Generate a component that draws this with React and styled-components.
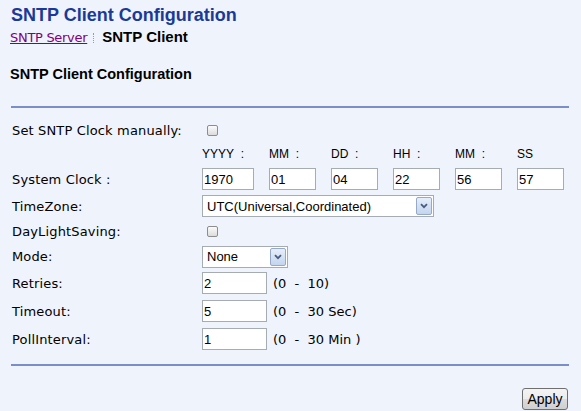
import React from "react";
import styled, { createGlobalStyle } from "styled-components";

const GlobalStyle = createGlobalStyle`
  html, body {
    margin: 0;
    padding: 0;
    background: #eff3fb;
  }
  body {
    width: 581px;
    height: 411px;
    overflow: hidden;
  }
`;

const Page = styled.div`
  padding: 4px 12px 0 11px;
  font-family: "DejaVu Sans", Verdana, sans-serif;
  font-size: 13px;
  color: #000;
`;

const Title = styled.h1`
  margin: 0;
  font: bold 18px/22px "Liberation Sans", Arial, sans-serif;
  color: #1b3a98;
`;

const Breadcrumb = styled.div`
  display: flex;
  align-items: baseline;
  height: 20px;
  line-height: 20px;
  margin-top: 2px;
`;

const NavLink = styled.a`
  margin-left: -1px;
  font: 13px "DejaVu Sans", Verdana, sans-serif;
  letter-spacing: -0.3px;
  color: #800080;
  text-decoration: underline;
  cursor: pointer;
`;

const Separator = styled.span`
  align-self: center;
  width: 0;
  height: 10px;
  margin: 0 8px 0 6px;
  border-left: 1px dotted #9a9a9a;
`;

const Current = styled.span`
  font: bold 15px "Liberation Sans", Arial, sans-serif;
`;

const SectionTitle = styled.h2`
  margin: 17px 0 0 -1px;
  font: bold 14.5px/18px "Liberation Sans", Arial, sans-serif;
`;

const Rule = styled.div`
  height: 2px;
  background: #7b8ec9;
  margin-top: ${(p) => p.$top}px;
`;

const Form = styled.div`
  margin-top: 10px;
`;

const Row = styled.div`
  display: grid;
  grid-template-columns: 191px 1fr;
  align-items: center;
  height: ${(p) => p.$h}px;
`;

const Label = styled.div`
  padding-left: 1px;
  font: 13px "DejaVu Sans", Verdana, sans-serif;
  letter-spacing: 0.15px;
  white-space: nowrap;
`;

const Field = styled.div`
  display: flex;
  align-items: center;
  gap: 6px;
`;

const DateGrid = styled.div`
  display: grid;
  grid-template-columns: 67px repeat(5, 62px);
  align-items: center;
`;

const DateLabel = styled.span`
  font: 12px "Liberation Sans", Arial, sans-serif;
  white-space: pre;
`;

const TextInput = styled.input`
  box-sizing: border-box;
  width: ${(p) => p.$w}px;
  height: 22px;
  margin: 0;
  padding: 0 1px;
  border: 1px solid #a5acb2;
  background: #fff;
  color: #000;
  font: 13px "Liberation Sans", Arial, sans-serif;
  outline: none;
`;

const Check = styled.input.attrs({ type: "checkbox" })`
  appearance: none;
  box-sizing: border-box;
  width: 11px;
  height: 11px;
  margin: 0 0 0 5px;
  border: 1px solid #8d8d8d;
  border-radius: 2px;
  background: linear-gradient(#fbfbfb, #dcdcdc);
`;

const SelectBox = styled.div`
  box-sizing: border-box;
  display: flex;
  width: ${(p) => p.$w}px;
  height: 22px;
  padding: 1px;
  border: 1px solid #a5acb2;
  background: #fff;
`;

const SelectText = styled.select`
  appearance: none;
  flex: 1;
  min-width: 0;
  margin: 0;
  padding: 0 0 0 3px;
  border: none;
  background: transparent;
  color: #000;
  font: 13px "Liberation Sans", Arial, sans-serif;
  outline: none;
`;

const ArrowBox = styled.span`
  box-sizing: border-box;
  display: flex;
  align-items: center;
  justify-content: center;
  width: 16px;
  border: 1px solid #97a9c9;
  border-radius: 2px;
  background: linear-gradient(#e6eefa, #c3d5ee);
`;

const Range = styled.span`
  font: 13px "DejaVu Sans", Verdana, sans-serif;
  white-space: pre;
`;

const Actions = styled.div`
  display: flex;
  justify-content: flex-end;
  margin-top: 22px;
  padding-right: 1px;
`;

const Button = styled.button`
  box-sizing: border-box;
  width: 46px;
  height: 22px;
  padding: 0;
  border: 1px solid #6f6f6f;
  border-radius: 3px;
  background: linear-gradient(#f4f4f4 0%, #ececec 50%, #dcdcdc 51%, #cfcfcf 100%);
  color: #000;
  font: 14px "Liberation Sans", Arial, sans-serif;
`;

const Chevron = () => (
  <svg width="8" height="6" viewBox="0 0 8 6">
    <polyline points="1,1.2 4,4.2 7,1.2" fill="none" stroke="#4a5d80" strokeWidth="1.8" />
  </svg>
);

const Select = ({ w, value, options }) => (
  <SelectBox $w={w}>
    <SelectText defaultValue={value}>
      {options.map((o) => (
        <option key={o}>{o}</option>
      ))}
    </SelectText>
    <ArrowBox>
      <Chevron />
    </ArrowBox>
  </SelectBox>
);

const dateParts = [
  { label: "YYYY\u00a0 :", value: "1970", w: 52 },
  { label: "MM\u00a0 :", value: "01", w: 47 },
  { label: "DD\u00a0 :", value: "04", w: 47 },
  { label: "HH\u00a0 :", value: "22", w: 47 },
  { label: "MM\u00a0 :", value: "56", w: 47 },
  { label: "SS", value: "57", w: 47 },
];

export default function App() {
  return (
    <>
      <GlobalStyle />
      <Page>
        <Title>SNTP Client Configuration</Title>
        <Breadcrumb>
          <NavLink>SNTP Server</NavLink>
          <Separator />
          <Current>SNTP Client</Current>
        </Breadcrumb>
        <SectionTitle>SNTP Client Configuration</SectionTitle>
        <Rule $top={23} />
        <Form>
          <Row $h={25}>
            <Label>Set SNTP Clock manually:</Label>
            <Field>
              <Check />
            </Field>
          </Row>
          <Row $h={22}>
            <span />
            <DateGrid>
              {dateParts.map((d, i) => (
                <DateLabel key={i}>{d.label}</DateLabel>
              ))}
            </DateGrid>
          </Row>
          <Row $h={28}>
            <Label>System Clock :</Label>
            <DateGrid>
              {dateParts.map((d, i) => (
                <TextInput key={i} $w={d.w} defaultValue={d.value} />
              ))}
            </DateGrid>
          </Row>
          <Row $h={26}>
            <Label>TimeZone:</Label>
            <Field>
              <Select w={232} value="UTC(Universal,Coordinated)" options={["UTC(Universal,Coordinated)"]} />
            </Field>
          </Row>
          <Row $h={25}>
            <Label>DayLightSaving:</Label>
            <Field>
              <Check />
            </Field>
          </Row>
          <Row $h={25}>
            <Label>Mode:</Label>
            <Field>
              <Select w={86} value="None" options={["None"]} />
            </Field>
          </Row>
          <Row $h={28}>
            <Label>Retries:</Label>
            <Field>
              <TextInput $w={65} defaultValue="2" />
              <Range>{"(0\u00a0 -\u00a0 10)"}</Range>
            </Field>
          </Row>
          <Row $h={28}>
            <Label>Timeout:</Label>
            <Field>
              <TextInput $w={65} defaultValue="5" />
              <Range>{"(0\u00a0 -\u00a0 30 Sec)"}</Range>
            </Field>
          </Row>
          <Row $h={28}>
            <Label>PollInterval:</Label>
            <Field>
              <TextInput $w={65} defaultValue="1" />
              <Range>{"(0\u00a0 -\u00a0 30 Min )"}</Range>
            </Field>
          </Row>
        </Form>
        <Rule $top={11} />
        <Actions>
          <Button>Apply</Button>
        </Actions>
      </Page>
    </>
  );
}
